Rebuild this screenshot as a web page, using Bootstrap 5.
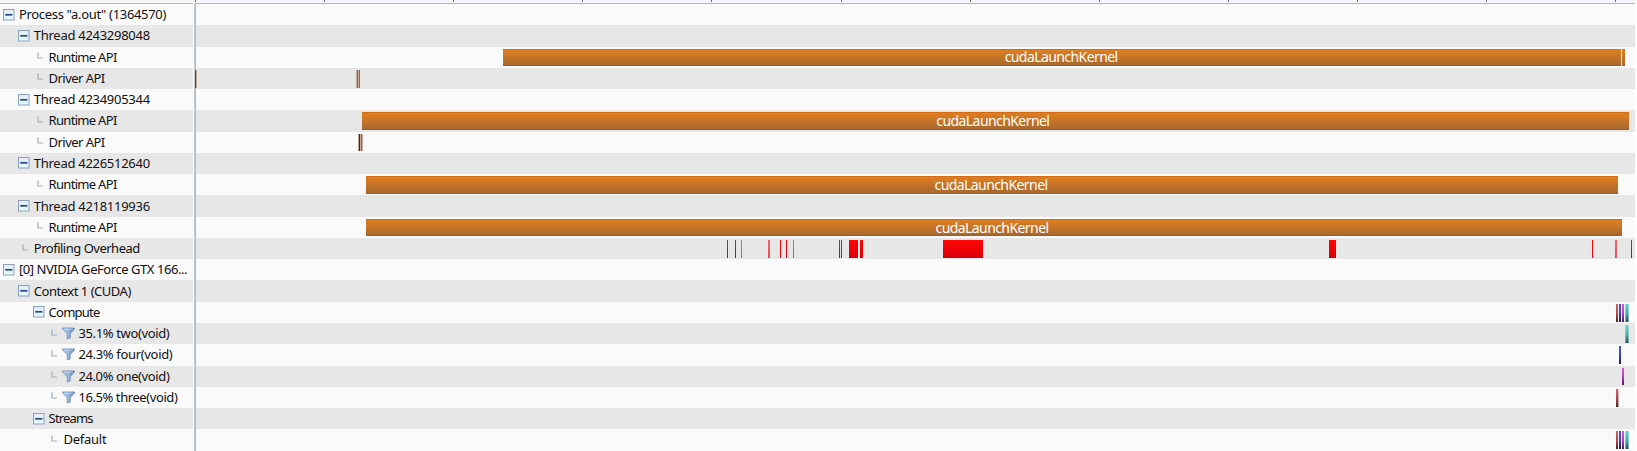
<!DOCTYPE html>
<html lang="en">
<head>
<meta charset="utf-8">
<title>Profiler timeline</title>
<link href="https://cdn.jsdelivr.net/npm/bootstrap@5.3.0/dist/css/bootstrap.min.css" rel="stylesheet">
<style>
body{font-family:"Noto Sans","Open Sans",sans-serif;font-size:13px;line-height:1;color:#111;background:#fff;height:451px}
.head-left{width:192.5px;height:4px;border-bottom:1px solid #b5b8bf;background:#f6f7f9}
.head-right{height:4px;margin-left:2.5px;width:1440px;border-bottom:1px solid #b3b6c0;background:repeating-linear-gradient(90deg,#666a70 0 1px,transparent 1px 129.1px) 0 0/100% 2px no-repeat #f4f5fa}
.line{height:21.28px;width:1635px}
.line .tree,.line .track{background:#fafafa}
.line:nth-child(even) .tree,.line:nth-child(even) .track{background:#e7e7e7}
.tree{width:193px;overflow:hidden;flex:none}
.rule-v{width:2px;margin-left:1px;background:linear-gradient(90deg,#c3c9cf 50%,#b4bbc8 50%);flex:none}
.track{min-width:0;padding-top:2px}
.tree svg{flex:none}
.lbl{margin-left:-.5px}
.seg{height:17.8px;flex:none;color:#fff;font-size:14px}
.launch{background:linear-gradient(#df7e20,#a8692f);border-top:1px solid #d66c12;border-bottom:1px solid #a35b20}
.over{background:linear-gradient(#ff0505,#d80008)}
.soft{background:linear-gradient(#ec6767,#df5058)}
.drv{background:#9a674b}.drvl{background:#c3a79a}.drvd{background:#57200c}.edge{background:#4b4b50}
.k3{background:linear-gradient(#c4686c,#b04b50 50%,#542427)}
.k3l{background:linear-gradient(#e3bfc0,#b9a1a2)}
.k4{background:linear-gradient(#4e50d8,#3c40c4 50%,#191b55)}
.k4l{background:linear-gradient(#aaaae6,#7c7ca8)}
.k1{background:linear-gradient(#d455d8,#b93cc0 50%,#4a1850)}
.k1l{background:linear-gradient(#e6bce8,#b497b6)}
.k2{background:linear-gradient(#5cd2cf,#46b5b2 50%,#1e5353)}
.k2l{background:linear-gradient(#a3e0de,#7ba09f)}
</style>
</head>
<body class="overflow-hidden">
<svg width="0" height="0" class="d-block"><defs>
<linearGradient id="fg"><stop offset="0" stop-color="#b4cbea"/><stop offset=".5" stop-color="#9ab8e0"/><stop offset="1" stop-color="#4e78b5"/></linearGradient>
<linearGradient id="bg" x2="0" y2="1"><stop offset="0" stop-color="#e4ecf3"/><stop offset="1" stop-color="#e3fcff"/></linearGradient></defs></svg>
<div class="d-flex"><div class="head-left"></div><div class="head-right"></div></div>
<div id="rows"></div>
<script src="https://cdn.jsdelivr.net/npm/bootstrap@5.3.0/dist/js/bootstrap.bundle.min.js"></script>
<script>
// label, depth, kind (b = expander, l = leaf, f = kernel leaf), label width, segments [start, end, class, text, text shift]
const three=[[1616,1618,'k3'],[1618,1619,'k3l']];
const four=[[1619,1621,'k4']];
const one=[[1622,1624,'k1']];
const two=[[1625,1626,'k2l'],[1626,1628,'k2'],[1628,1629,'k2l']];
const kernels=[[1616,1618,'k3'],...four,...one,...two];
const N='cudaLaunchKernel';
const reds=[[727,728.2],[735,736.2],[741,742,1],[768,770,1],[780,781],[786,787],[793,794,1],[839,840],[841,842],[849,858],[860,863.3],[943,983],[1329,1336],[1592,1593],[1615,1617,1],[1631,1632]].map(r=>[r[0],r[1],r[2]?'soft':'over']);
const data=[
['Process "a.out" (1364570)',0,'b',147,[]],
['Thread 4243298048',1,'b',116,[]],
['Runtime API',2,'l',68,[[503.3,1621,'launch',N,2],[1622,1625,'launch']]],
['Driver API',2,'l',56,[[195,196,'edge'],[196,197,'drvl'],[356,357,'drvl'],[357,358,'drv'],[358,359,'drvl'],[359,360,'drv']]],
['Thread 4234905344',1,'b',116,[]],
['Runtime API',2,'l',68,[[362.3,1629.4,'launch',N,6]]],
['Driver API',2,'l',56,[[358,359,'drvl'],[359,360,'drvd'],[360,361,'drvl'],[361,362,'drv'],[362,363,'drvl']]],
['Thread 4226512640',1,'b',116,[]],
['Runtime API',2,'l',68,[[366,1618,'launch',N,2]]],
['Thread 4218119936',1,'b',116,[]],
['Runtime API',2,'l',68,[[366,1622,'launch',N,4]]],
['Profiling Overhead',1,'l',106,reds],
['[0] NVIDIA GeForce GTX 166...',0,'b',168,[]],
['Context 1 (CUDA)',1,'b',97,[]],
['Compute',2,'b',51,kernels],
['35.1% two(void)',3,'f',91,two],
['24.3% four(void)',3,'f',94,four],
['24.0% one(void)',3,'f',91,one],
['16.5% three(void)',3,'f',99,three],
['Streams',2,'b',44,[]],
['Default',3,'l',43,kernels]];
const icon={
b:'<svg width="12" height="12" style="margin-left:3px;margin-right:4.5px"><rect x=".5" y=".5" width="10.5" height="10.5" fill="url(#bg)" stroke="#8da0b8"/><path d="M2.2 5.8h7.2" stroke="#264783" stroke-width="1.7"/></svg>',
l:'<svg width="12" height="12" style="margin-left:3px;margin-right:4.5px"><path d="M5 1.5v5.5h5" fill="none" stroke="#9dafc0" stroke-width="1.2"/></svg>'};
icon.f=icon.l.replace('4.5px','-1.5px')+'<svg width="13" height="13" viewBox="0 0 13 13" style="margin-left:4px;margin-right:4px"><path d="M.6 1h11.8v1L8.2 6.6v4.3L5.3 12V6.6L.6 2z" fill="url(#fg)" stroke="#6787b5" stroke-width=".8"/><path d="M2 2.2h9" stroke="#d6e4f6" stroke-width=".7"/></svg>';
const ctx=document.createElement('canvas').getContext('2d');
function spacing(text,size,width){ctx.font=size+'px "Noto Sans"';return ((width-ctx.measureText(text).width)/text.length).toFixed(3)+'px';}
document.getElementById('rows').innerHTML=data.map(([label,depth,kind,width,segs])=>{
  let pos=196;
  const bars=segs.map(([a,b,c,t,s])=>{
    const gap=a-pos;pos=b;
    return `<div class="seg ${c} d-flex align-items-center justify-content-center" style="margin-left:${gap}px;width:${b-a}px">${t?`<span class="text-nowrap" style="margin-right:${s}px;letter-spacing:${spacing(t,14,113)}">${t}</span>`:''}</div>`;
  }).join('');
  return `<div class="line d-flex"><div class="tree d-flex align-items-center" style="padding-left:${depth*14.8}px">${icon[kind]}<span class="lbl text-nowrap" style="letter-spacing:${spacing(label,13,width)}">${label}</span></div><div class="rule-v"></div><div class="track d-flex flex-grow-1">${bars}</div></div>`;
}).join('');
</script>
</body>
</html>
